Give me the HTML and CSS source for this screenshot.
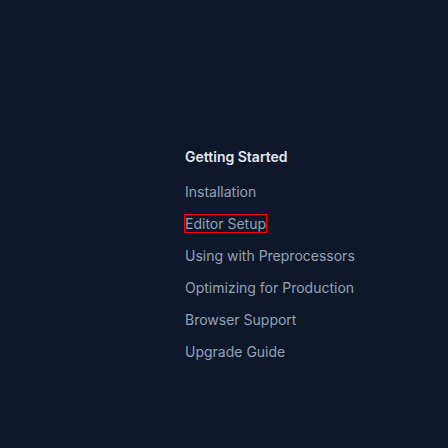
FILE: index.html
```html
<!DOCTYPE html>
<html>
<head>
<meta charset="utf-8">
<link rel="stylesheet" href="styles.css">
</head>
<body>
<nav class="sidebar">
  <h5 class="heading">Getting Started</h5>
  <ul class="list">
    <li><a class="link" href="#">Installation</a></li>
    <li><a class="link focused" href="#">Editor Setup</a></li>
    <li><a class="link" href="#">Using with Preprocessors</a></li>
    <li><a class="link" href="#">Optimizing for Production</a></li>
    <li><a class="link" href="#">Browser Support</a></li>
    <li><a class="link" href="#">Upgrade Guide</a></li>
  </ul>
</nav>
</body>
</html>
```
FILE: styles.css
```css
html, body {
  margin: 0;
  padding: 0;
  background: #0f172a;
  height: 100%;
}
body {
  font-family: Inter, "Liberation Sans", sans-serif;
}
.sidebar {
  padding: 147px 0 0 185px;
}
.heading {
  margin: 0 0 15px 0;
  font-size: 14px;
  line-height: 20px;
  font-weight: 600;
  color: #e2e8f0;
}
.list {
  list-style: none;
  margin: 0;
  padding: 0;
  display: flex;
  flex-direction: column;
  gap: 12px;
}
.list li {
  font-size: 14px;
  line-height: 20px;
}
.link {
  color: #94a3b8;
  text-decoration: none;
}
.focused {
  outline: 1px solid #ff0000;
}
```
